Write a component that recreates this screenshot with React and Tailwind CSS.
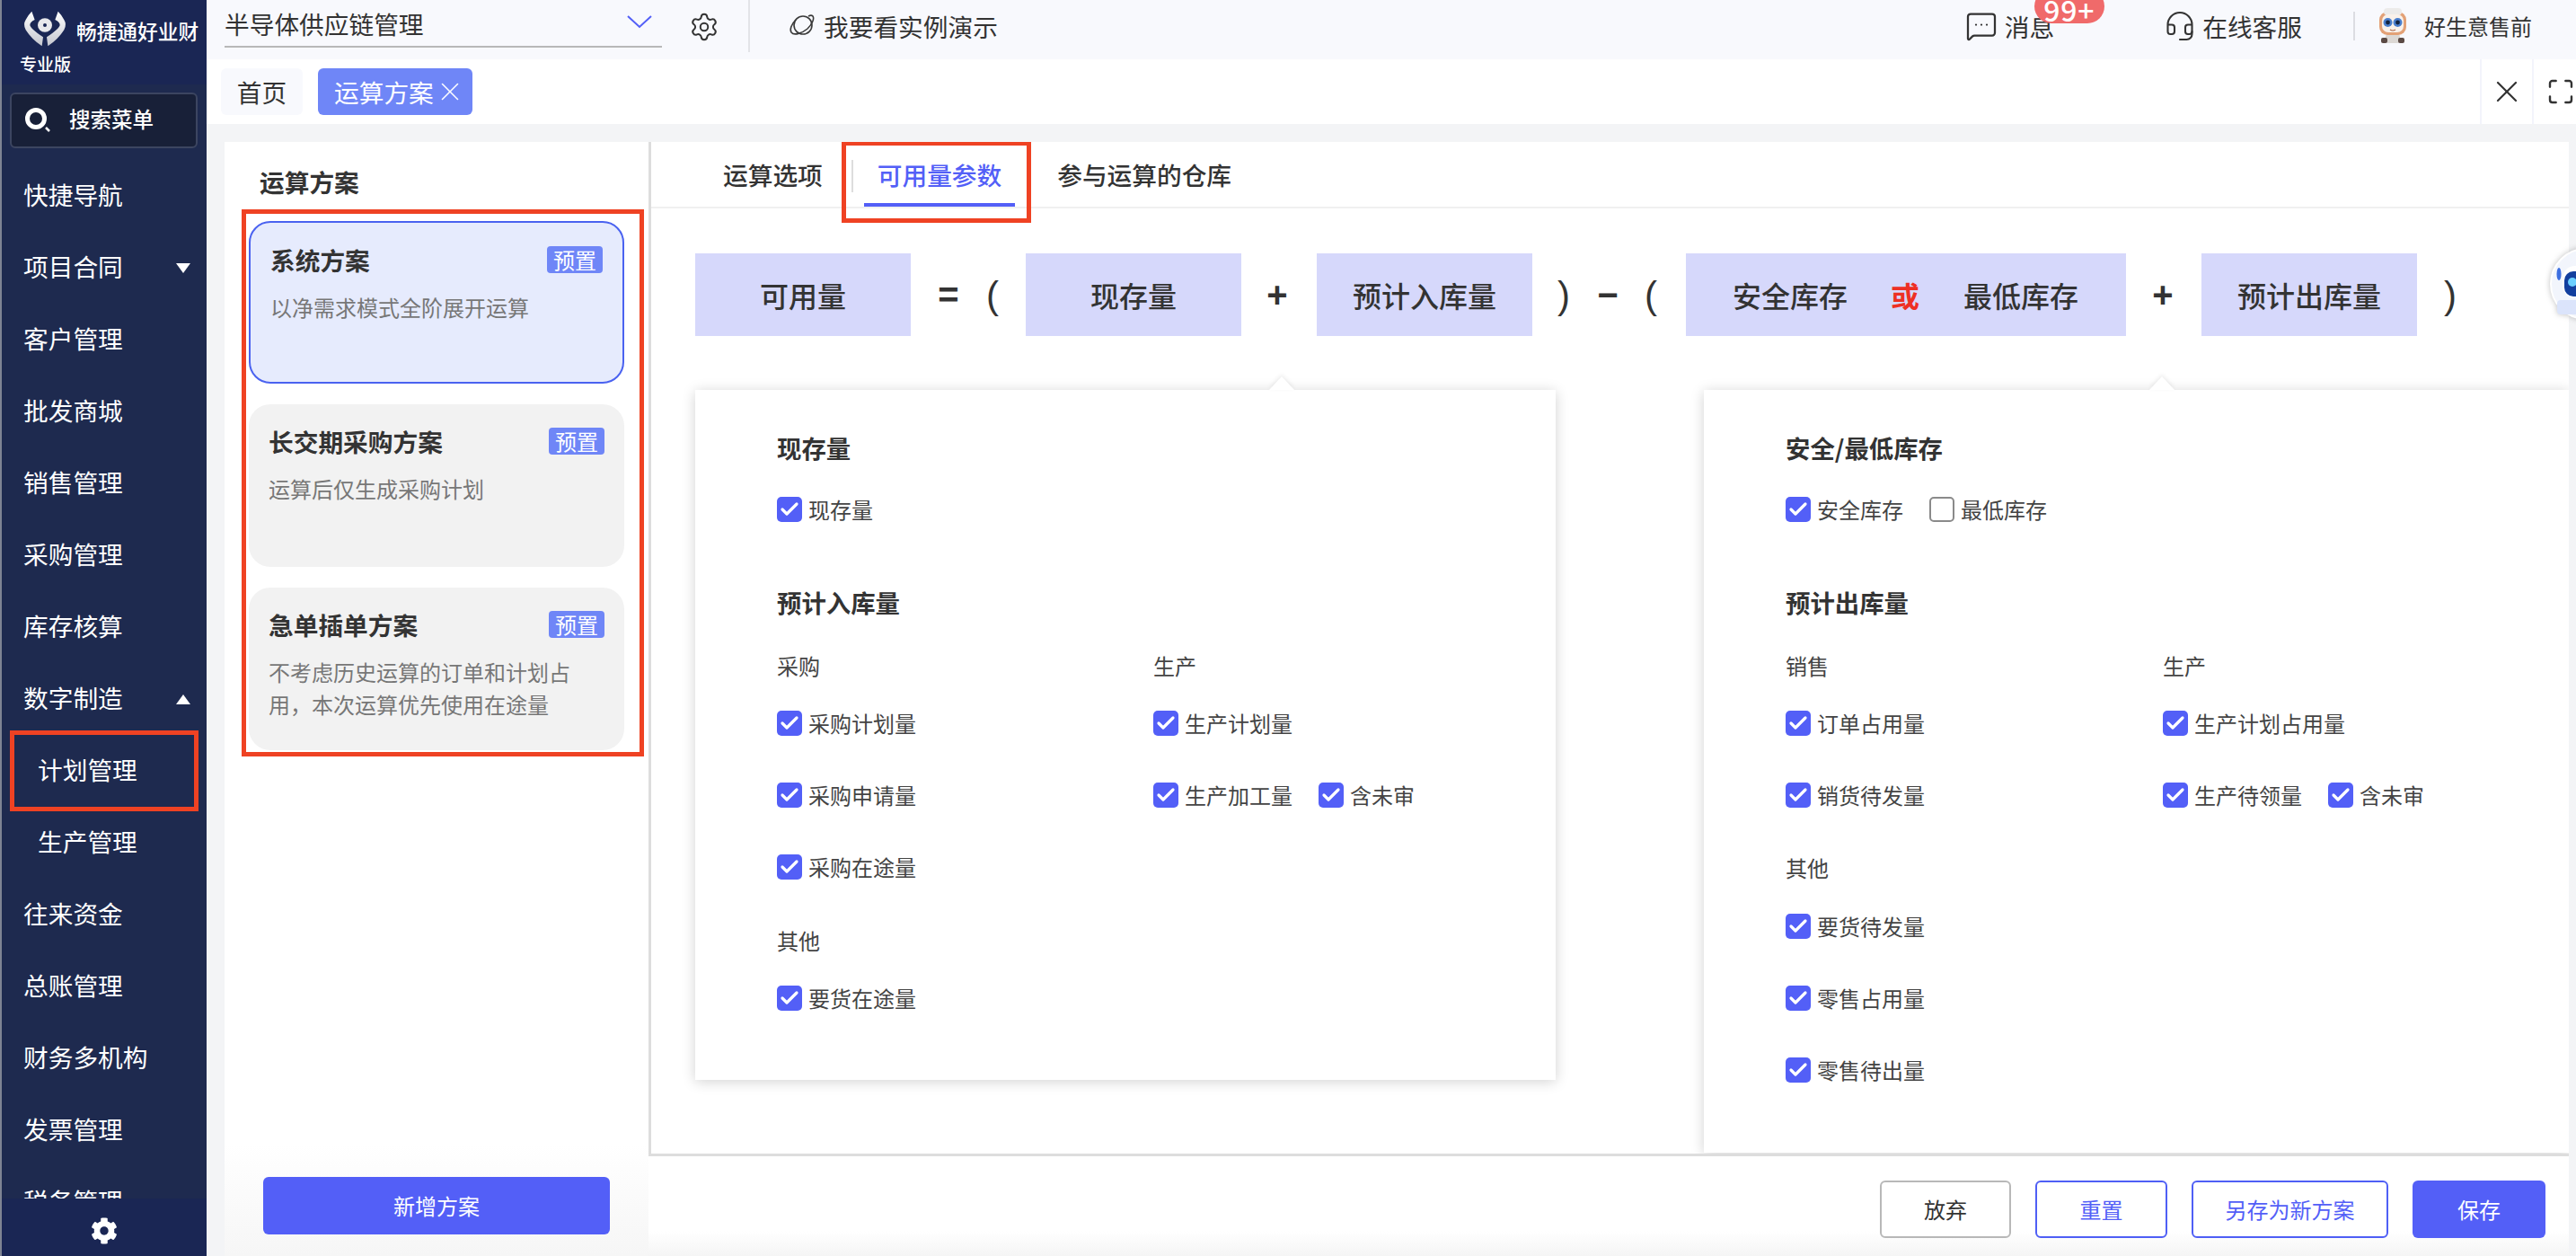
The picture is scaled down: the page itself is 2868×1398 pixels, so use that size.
import React from 'react';
import { Settings, MessageSquareMore, Headset, X, Check, Maximize } from 'lucide-react';
import { FaCog } from 'react-icons/fa';

const menus = ['快捷导航', '项目合同', '客户管理', '批发商城', '销售管理', '采购管理', '库存核算', '数字制造'];
const menusAfter = ['往来资金', '总账管理', '财务多机构', '发票管理', '税务管理'];

function Logo() {
  return (
    <svg viewBox="0 0 180 150" className="w-[60px] h-[50px] shrink-0">
      <defs>
        <linearGradient id="wing" x1="0" y1="0" x2="0" y2="1">
          <stop offset="0" stopColor="#ffffff" />
          <stop offset="1" stopColor="#c4c6cf" />
        </linearGradient>
      </defs>
      <path d="M46 14 L56 42 Q40 50 40 60 Q42 72 84 100 L80 130 Q46 108 26 76 Q16 58 26 42 Q34 26 46 14Z" fill="url(#wing)" />
      <path d="M134 14 L124 42 Q140 50 140 60 Q138 72 96 100 L100 130 Q134 108 154 76 Q164 58 154 42 Q146 26 134 14Z" fill="url(#wing)" />
      <ellipse cx="90" cy="60" rx="24" ry="23" fill="#e8e8ec" />
      <circle cx="90" cy="60" r="6" fill="#1a2654" />
    </svg>
  );
}

function Avatar() {
  return (
    <svg viewBox="0 0 36 40" className="w-[36px] h-[40px] shrink-0">
      <rect x="10" y="29" width="16" height="10" rx="3" fill="#dcd8d4" />
      <rect x="5" y="33" width="7" height="6" rx="2" fill="#5b4a44" />
      <rect x="24" y="33" width="7" height="6" rx="2" fill="#5b4a44" />
      <rect x="3" y="4" width="30" height="26" rx="9" fill="#e3a176" />
      <rect x="8" y="0" width="20" height="8" rx="4" fill="#ecebea" />
      <rect x="6" y="7" width="24" height="20" rx="7" fill="#f9f1ea" />
      <circle cx="12.5" cy="16" r="5" fill="#4a7fce" />
      <circle cx="23.5" cy="16" r="5" fill="#4a7fce" />
      <circle cx="12.5" cy="16" r="2.4" fill="#14233f" />
      <circle cx="23.5" cy="16" r="2.4" fill="#14233f" />
      <path d="M15 24 Q18 26 21 24" stroke="#a9664a" strokeWidth="1.2" fill="none" />
    </svg>
  );
}

function Planet() {
  return (
    <svg viewBox="0 0 30 30" fill="none" stroke="#3a3a3a" strokeWidth="1.6" className="w-[30px] h-[30px] shrink-0">
      <circle cx="16" cy="14" r="10" />
      <path d="M8 8 C3 13 1 19 3 22 C6 26 15 23 21 18 C26 13 29 7 27 4 C26 3 24 3 22 4" />
    </svg>
  );
}

function Robot() {
  return (
    <svg viewBox="0 0 80 80" className="w-[80px] h-[80px] drop-shadow-[0_0_3px_rgba(0,0,0,0.25)]">
      <circle cx="40" cy="40" r="39" fill="#f2f5fc" stroke="#ffffff" strokeWidth="2" />
      <ellipse cx="10" cy="29" rx="2.5" ry="7" fill="#3d6fe0" />
      <rect x="14" y="20" width="50" height="36" rx="14" fill="#ffffff" />
      <rect x="16" y="26" width="44" height="28" rx="10" fill="#123f9e" />
      <circle cx="25" cy="38" r="5" fill="#6ccfff" />
      <rect x="8" y="58" width="44" height="16" rx="4" fill="#dbe4fb" />
    </svg>
  );
}

function SideItem({ label, arrow }) {
  return (
    <div className="h-20 shrink-0 flex items-center justify-between pl-[24px] pr-[18px]">
      <span className="mb-1">{label}</span>
      {arrow === 'down' && <span className="w-0 h-0 border-x-[8px] border-x-transparent border-t-[11px] border-t-white" />}
      {arrow === 'up' && <span className="w-0 h-0 border-x-[8px] border-x-transparent border-b-[11px] border-b-white" />}
    </div>
  );
}

function Sidebar() {
  return (
    <aside className="w-[230px] shrink-0 h-full flex flex-col bg-[#1e2a4f] border-l-2 border-[#7f8493] text-white text-[27.7px] leading-10">
      <div className="h-[94px] shrink-0 bg-[#1a2654]">
        <div className="flex items-start pl-[18px] pt-2">
          <Logo />
          <span className="ml-[5px] mt-[7px] text-[22.7px] leading-10 font-medium">畅捷通好业财</span>
        </div>
        <div className="pl-5 mt-[-2px] text-[19px] leading-[30px] font-medium">专业版</div>
      </div>
      <div className="mt-[9px] ml-[9px] w-[209px] h-[62px] shrink-0 flex items-center rounded-md border-2 border-[#3c4560] bg-[#182038] pl-[15px] text-[23.5px] font-medium">
        <svg viewBox="0 0 30 30" fill="none" stroke="#fff" className="w-[30px] h-[30px] shrink-0">
          <circle cx="12" cy="13" r="9.5" strokeWidth="5" />
          <path d="M23 23 L27 27" strokeWidth="2.5" />
        </svg>
        <span className="ml-[19px] mb-1">搜索菜单</span>
      </div>
      <div className="mt-[13px] flex-1 min-h-0 overflow-hidden">
        {menus.map((m) => (
          <SideItem key={m} label={m} arrow={m === '项目合同' ? 'down' : m === '数字制造' ? 'up' : null} />
        ))}
        <div className="relative h-20 flex items-center pl-[40px]">
          <span className="mb-1">计划管理</span>
          <div className="absolute left-[9px] w-[210px] top-[-5px] bottom-[-5px] border-[5px] border-[#ef4223]" />
        </div>
        <div className="h-20 flex items-center pl-[40px]"><span className="mb-1">生产管理</span></div>
        {menusAfter.map((m) => (
          <SideItem key={m} label={m} />
        ))}
      </div>
      <div className="h-16 shrink-0 bg-[#1a2654] flex items-center justify-center pt-2">
        <FaCog className="w-[30px] h-[30px]" />
      </div>
    </aside>
  );
}

function Header() {
  return (
    <header className="h-[66px] shrink-0 bg-[#f8f9fd] flex items-start overflow-hidden text-[27.7px] text-[#333] leading-10">
      <div className="ml-5 w-[487px] h-[53px] pt-[6px] flex items-start justify-between pr-[11px] border-b-2 border-[#b8b8b8]">
        <span>半导体供应链管理</span>
        <svg viewBox="0 0 28 16" fill="none" stroke="#535ff7" strokeWidth="2" className="w-7 h-4 mt-[10px]">
          <path d="M1 2 L14 14 L27 2" />
        </svg>
      </div>
      <Settings className="ml-[30px] mt-[13px] w-[34px] h-[34px] text-[#333]" strokeWidth={1.4} />
      <div className="ml-[32px] w-[2px] h-[58px] bg-[#e3e4e8]" />
      <div className="ml-[43px] h-[58px] flex items-center gap-[9px]">
        <Planet />
        <span>我要看实例演示</span>
      </div>
      <div className="ml-auto h-[58px] flex items-center pr-[49px]">
        <MessageSquareMore className="w-9 h-9 text-[#333]" strokeWidth={1.5} />
        <span className="relative ml-[8px]">
          消息
          <span className="absolute left-[33px] top-[-21px] w-[78px] h-[38px] rounded-full bg-[#f06a6a] text-white text-[32px] leading-[44px] tracking-wide font-medium text-center">99+</span>
        </span>
        <Headset className="ml-[122px] w-9 h-9 text-[#333]" strokeWidth={1.4} />
        <span className="ml-[7px]">在线客服</span>
        <div className="ml-[57px] w-[2px] h-[32px] bg-[#dcdde2]" />
        <div className="ml-[24px]"><Avatar /></div>
        <span className="ml-[17px] text-2xl">好生意售前</span>
      </div>
    </header>
  );
}

function TabBar() {
  return (
    <div className="h-[72px] shrink-0 bg-white flex items-center pl-4 text-[27.7px] leading-10">
      <div className="w-[91px] h-[52px] rounded-md bg-[#f8f9fd] text-[#333] flex items-center justify-center">首页</div>
      <div className="ml-[17px] w-[172px] h-[52px] rounded-md bg-[#6f86f7] text-white flex items-center pl-[18px]">
        运算方案
        <X className="ml-[1px] w-[34px] h-[34px]" strokeWidth={1.1} />
      </div>
      <div className="ml-auto h-full flex">
        <div className="w-[60px] border-x-2 border-[#f3f4fb] flex items-center justify-center">
          <X className="w-10 h-10 text-[#333]" strokeWidth={1.3} />
        </div>
        <div className="w-[47px] pl-[14px] flex items-center">
          <Maximize className="w-8 h-8 text-[#333]" strokeWidth={1.8} />
        </div>
      </div>
    </div>
  );
}

function PlanCard({ title, desc, active }) {
  return (
    <div className={`h-[181px] rounded-[24px] px-[22px] pt-[21px] ${active ? 'bg-[#e6ebfd] border-2 border-[#4a62f0]' : 'bg-[#f2f2f2]'}`}>
      <div className="flex items-center justify-between">
        <span className="text-[27.7px] leading-10 font-bold text-[#333]">{title}</span>
        <span className="w-[62px] h-[30px] rounded bg-[#6f86f7] text-white text-2xl leading-[30px] text-center">预置</span>
      </div>
      <p className="mt-[15px] text-2xl leading-9 text-[#777]">{desc}</p>
    </div>
  );
}

function PlanPanel() {
  return (
    <section className="w-[472px] shrink-0 bg-linear-to-b from-white from-90% to-[#f6f6f6] flex flex-col">
      <h2 className="mt-[24px] ml-[39px] text-[27.7px] leading-10 font-bold text-[#333]">运算方案</h2>
      <div className="mt-[11px] ml-[19px] w-[448px] h-[609px] border-[5px] border-[#ef4223] pl-[3px] pr-[17px] pt-2 flex flex-col gap-[23px]">
        <PlanCard active title="系统方案" desc="以净需求模式全阶展开运算" />
        <PlanCard title="长交期采购方案" desc="运算后仅生成采购计划" />
        <PlanCard title="急单插单方案" desc="不考虑历史运算的订单和计划占用，本次运算优先使用在途量" />
      </div>
      <button className="mt-auto mb-6 ml-[43px] w-[386px] h-16 rounded-md bg-[#535ff7] text-white text-2xl">新增方案</button>
    </section>
  );
}

function FBox({ children, className = '' }) {
  return (
    <div className={`h-[92px] shrink-0 bg-[#d6d8fb] flex items-center text-[32px] font-medium text-[#333] ${className}`}>
      {children}
    </div>
  );
}

function Op({ children, className = '' }) {
  return (
    <span className={`w-[30px] shrink-0 text-center text-[40px] font-bold text-[#333] ${className}`} style={{ fontFamily: '"Liberation Sans", sans-serif' }}>
      {children}
    </span>
  );
}

function Paren({ children, className = '' }) {
  return (
    <span className={`w-[30px] shrink-0 text-center text-[42px] font-normal text-[#333] ${className}`} style={{ fontFamily: '"Liberation Sans", sans-serif' }}>
      {children}
    </span>
  );
}

function Formula() {
  return (
    <div className="mt-[50px] pl-[49px] flex items-center h-[92px]">
      <FBox className="w-[240px] justify-center">可用量</FBox>
      <Op className="ml-[27px]">=</Op>
      <Paren className="ml-[19px]">(</Paren>
      <FBox className="w-[240px] justify-center ml-[22px]">现存量</FBox>
      <Op className="ml-[25px]">+</Op>
      <FBox className="w-[240px] justify-center ml-[29px]">预计入库量</FBox>
      <Paren className="ml-[20px]">)</Paren>
      <Op className="ml-[19px]">−</Op>
      <Paren className="ml-[18px]">(</Paren>
      <FBox className="ml-[24px] w-[490px] pl-[52px]">
        <span>安全库存</span>
        <span className="ml-[48px] font-bold text-[#ee3024]">或</span>
        <span className="ml-[49px]">最低库存</span>
      </FBox>
      <Op className="ml-[26px]">+</Op>
      <FBox className="w-[240px] justify-center ml-[28px]">预计出库量</FBox>
      <Paren className="ml-[22px]">)</Paren>
    </div>
  );
}

function Chk({ label, off }) {
  return (
    <div className="flex items-center gap-[7px]">
      {off ? (
        <span className="w-7 h-7 rounded-[5px] border-2 border-[#8a8a8a] bg-white" />
      ) : (
        <span className="w-7 h-7 rounded-[5px] bg-[#535ff7] flex items-center justify-center">
          <Check className="w-6 h-6 text-white" strokeWidth={3.2} />
        </span>
      )}
      <span>{label}</span>
    </div>
  );
}

function Row({ children, className = '' }) {
  return <div className={`h-10 flex items-center gap-[29px] ${className}`}>{children}</div>;
}

function Title({ children, className = '' }) {
  return <div className={`h-10 text-[27.4px] leading-[36px] font-bold text-[#333] ${className}`}>{children}</div>;
}

function Sub({ children, className = '' }) {
  return <div className={`h-10 leading-10 ${className}`}>{children}</div>;
}

function PopPanel({ className, caret, children }) {
  return (
    <div className={`relative bg-white shadow-[0_2px_14px_rgba(0,0,0,0.18)] pt-[46px] text-2xl text-[#444] ${className}`}>
      <span className={`absolute top-[-15px] w-0 h-0 border-x-[14px] border-x-transparent border-b-[15px] border-b-white drop-shadow-[0_-2px_2px_rgba(0,0,0,0.08)] ${caret}`} />
      {children}
    </div>
  );
}

function StockPanel() {
  return (
    <PopPanel className="w-[958px] h-[768px] pl-[91px]" caret="left-[639px]">
      <Title>现存量</Title>
      <Row className="mt-[27px]"><Chk label="现存量" /></Row>
      <Title className="mt-[65px]">预计入库量</Title>
      <div className="mt-[29px] flex">
        <div className="w-[419px]">
          <Sub>采购</Sub>
          <Row className="mt-6"><Chk label="采购计划量" /></Row>
          <Row className="mt-10"><Chk label="采购申请量" /></Row>
          <Row className="mt-10"><Chk label="采购在途量" /></Row>
          <Sub className="mt-[42px]">其他</Sub>
          <Row className="mt-6"><Chk label="要货在途量" /></Row>
        </div>
        <div>
          <Sub>生产</Sub>
          <Row className="mt-6"><Chk label="生产计划量" /></Row>
          <Row className="mt-10"><Chk label="生产加工量" /><Chk label="含未审" /></Row>
        </div>
      </div>
    </PopPanel>
  );
}

function SafetyPanel() {
  return (
    <PopPanel className="ml-[165px] w-[963px] h-[849px] pl-[91px]" caret="left-[496px]">
      <Title>安全/最低库存</Title>
      <Row className="mt-[27px]"><Chk label="安全库存" /><Chk label="最低库存" off /></Row>
      <Title className="mt-[65px]">预计出库量</Title>
      <div className="mt-[29px] flex">
        <div className="w-[420px]">
          <Sub>销售</Sub>
          <Row className="mt-6"><Chk label="订单占用量" /></Row>
          <Row className="mt-10"><Chk label="销货待发量" /></Row>
          <Sub className="mt-[41px]">其他</Sub>
          <Row className="mt-[25px]"><Chk label="要货待发量" /></Row>
          <Row className="mt-10"><Chk label="零售占用量" /></Row>
          <Row className="mt-10"><Chk label="零售待出量" /></Row>
        </div>
        <div>
          <Sub>生产</Sub>
          <Row className="mt-6"><Chk label="生产计划占用量" /></Row>
          <Row className="mt-10"><Chk label="生产待领量" /><Chk label="含未审" /></Row>
        </div>
      </div>
    </PopPanel>
  );
}

function ParamPanel() {
  return (
    <section className="flex-1 min-w-0 flex flex-col">
      <div className="flex-1 min-h-0 bg-white border-l-[3px] border-[#dddddd] overflow-hidden">
        <div className="relative h-[74px] border-b-2 border-[#f0f0f0] flex items-start pl-[80px] text-[27.7px] leading-10 font-medium text-[#333]">
          <div className="h-[72px] flex items-center">运算选项</div>
          <div className="ml-8 mt-[20px] w-[2px] h-9 bg-[#dddddd]" />
          <div className="ml-[12px] h-[72px] px-[15px] flex items-center border-y-4 border-t-transparent border-b-[#535ff7] text-[#535ff7]">可用量参数</div>
          <div className="ml-[47px] h-[72px] flex items-center">参与运算的仓库</div>
          <div className="absolute left-[212px] top-[-1px] w-[211px] h-[91px] border-[5px] border-[#ef4223]" />
        </div>
        <Formula />
        <div className="mt-[60px] pl-[49px] flex items-start">
          <StockPanel />
          <SafetyPanel />
        </div>
      </div>
      <footer className="h-[114px] shrink-0 border-t-[3px] border-[#dddddd] bg-linear-to-b from-white from-75% to-[#f5f5f5] flex items-start justify-end gap-[27px] pt-[27px] pr-[26px] text-2xl">
        <button className="w-[146px] h-16 rounded-md border-2 border-[#b8b8b8] bg-white text-[#333]">放弃</button>
        <button className="w-[147px] h-16 rounded-md border-2 border-[#4f5ff5] bg-white text-[#535ff7]">重置</button>
        <button className="w-[219px] h-16 rounded-md border-2 border-[#4f5ff5] bg-white text-[#535ff7]">另存为新方案</button>
        <button className="w-[148px] h-16 rounded-md bg-[#535ff7] text-white">保存</button>
      </footer>
    </section>
  );
}

export default function App() {
  return (
    <div
      className="relative w-[2868px] h-[1398px] flex overflow-hidden bg-white"
      style={{ fontFamily: '"Noto Sans CJK SC", "Liberation Sans", sans-serif' }}
    >
      <Sidebar />
      <div className="flex-1 min-w-0 flex flex-col">
        <Header />
        <TabBar />
        <main className="flex-1 min-h-0 flex bg-[#f3f4f6] pt-5 pl-5 pr-2">
          <PlanPanel />
          <ParamPanel />
        </main>
      </div>
      <div className="absolute left-[2839px] top-[276px]">
        <Robot />
      </div>
    </div>
  );
}
